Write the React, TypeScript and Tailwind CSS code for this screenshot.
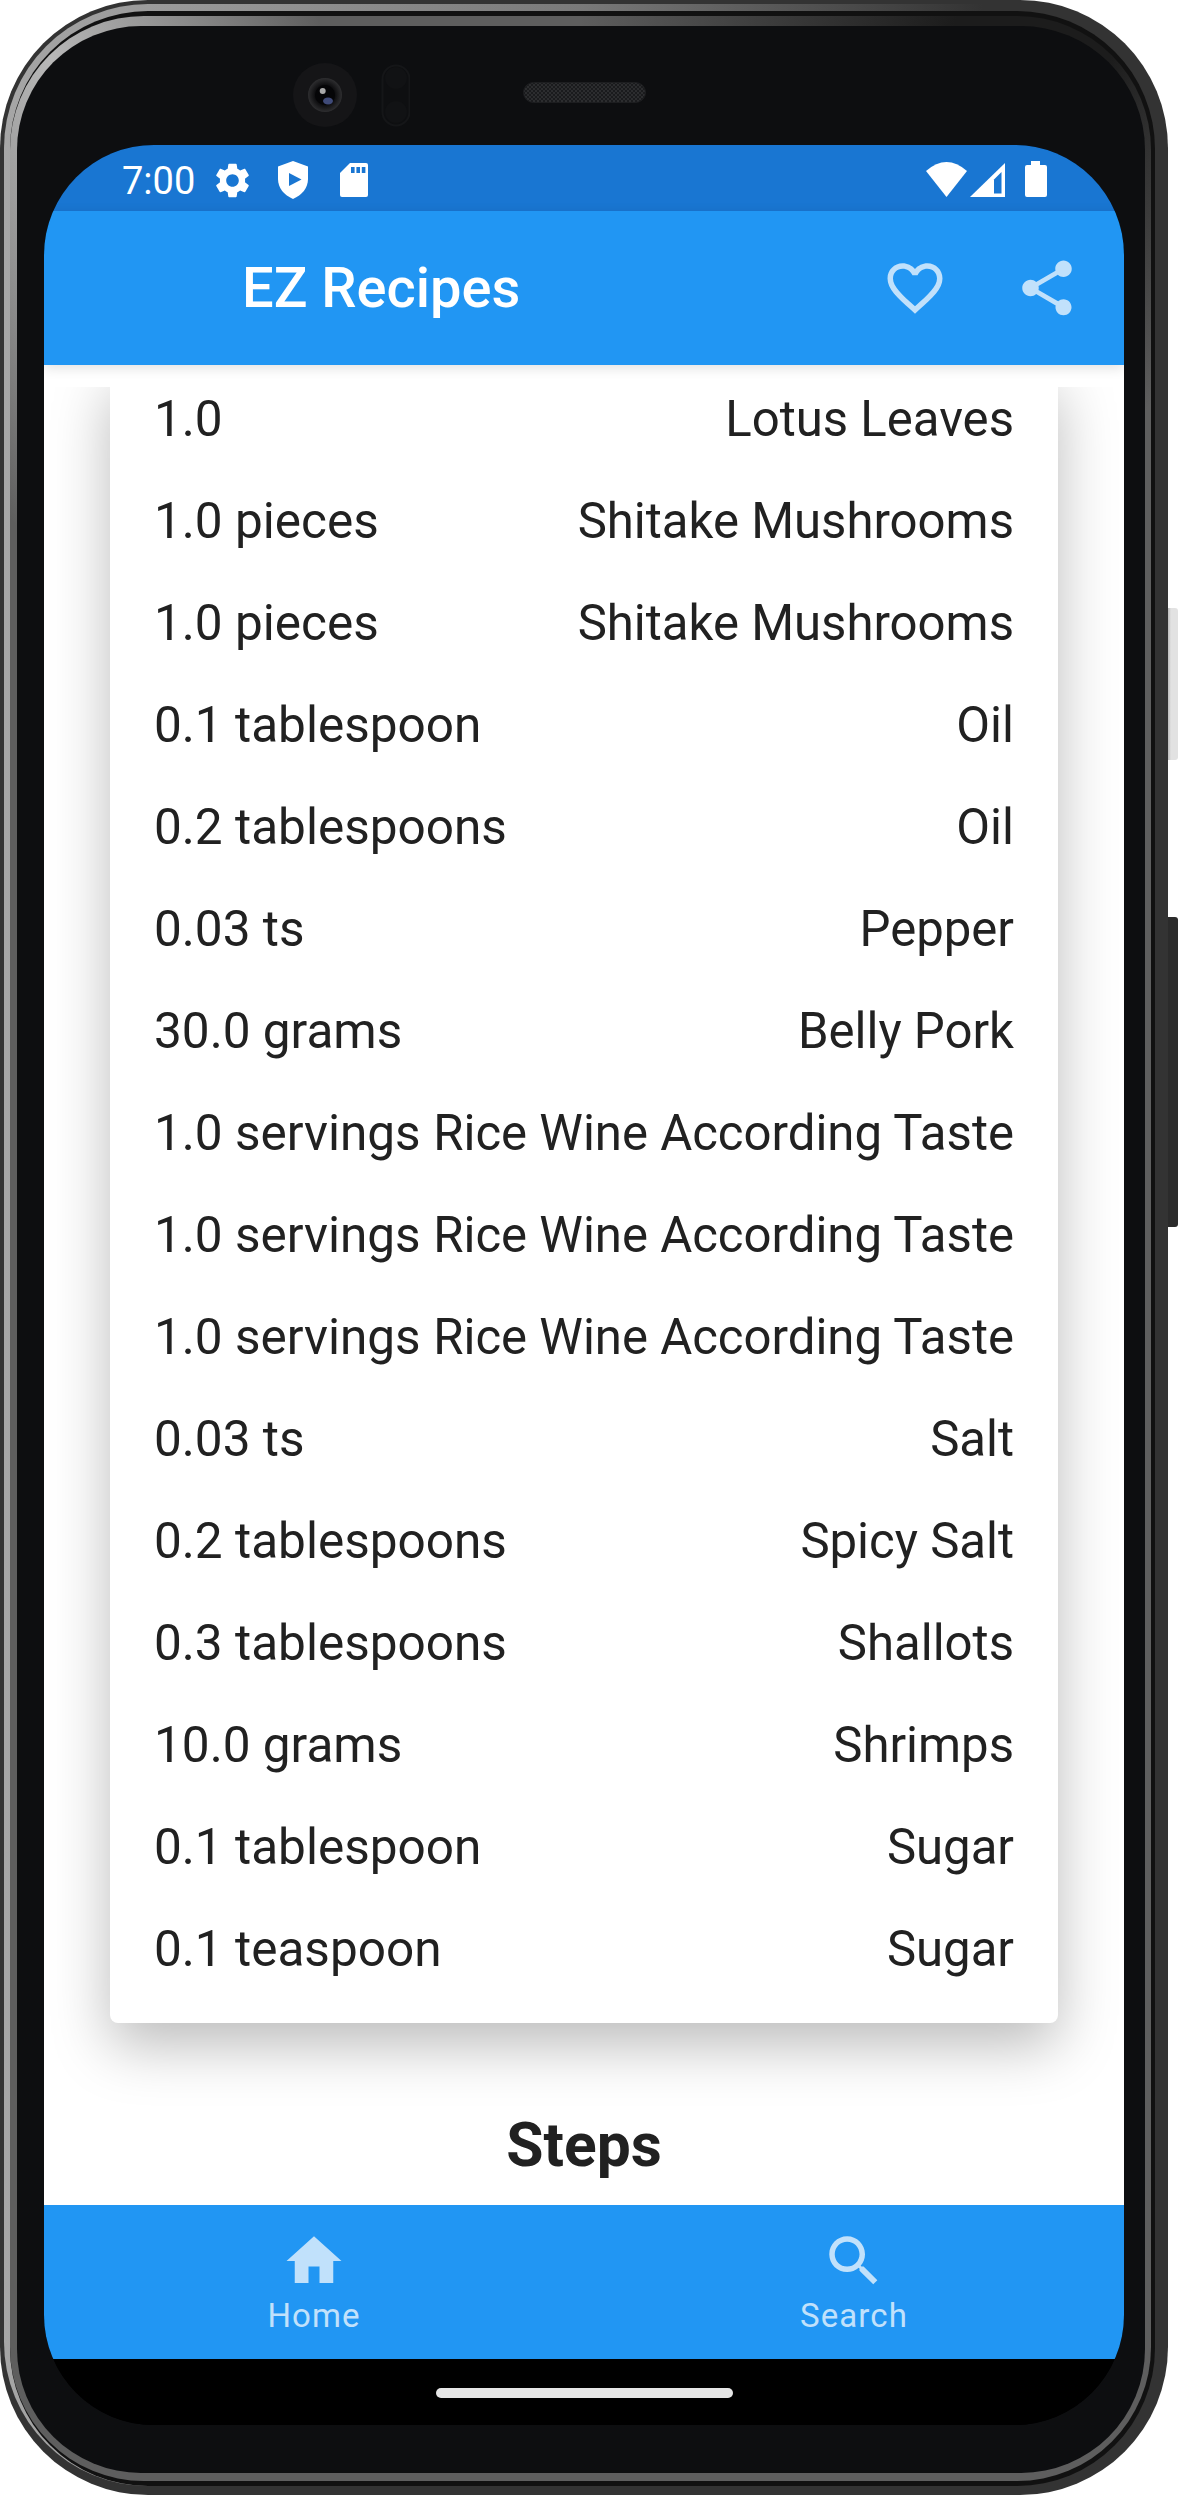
const rows: [string, string][] = [
  ["1.0", "Lotus Leaves"],
  ["1.0 pieces", "Shitake Mushrooms"],
  ["1.0 pieces", "Shitake Mushrooms"],
  ["0.1 tablespoon", "Oil"],
  ["0.2 tablespoons", "Oil"],
  ["0.03 ts", "Pepper"],
  ["30.0 grams", "Belly Pork"],
  ["1.0 servings", "Rice Wine According Taste"],
  ["1.0 servings", "Rice Wine According Taste"],
  ["1.0 servings", "Rice Wine According Taste"],
  ["0.03 ts", "Salt"],
  ["0.2 tablespoons", "Spicy Salt"],
  ["0.3 tablespoons", "Shallots"],
  ["10.0 grams", "Shrimps"],
  ["0.1 tablespoon", "Sugar"],
  ["0.1 teaspoon", "Sugar"],
];

function Cameras() {
  return (
    <svg width="117" height="64" viewBox="0 0 117 64" className="shrink-0">
      <defs>
        <radialGradient id="lens" cx="50%" cy="50%" r="50%">
          <stop offset="55%" stopColor="#0a0a0c" />
          <stop offset="100%" stopColor="#2e2e30" />
        </radialGradient>
      </defs>
      <circle cx="32" cy="32" r="32" fill="#151517" />
      <circle cx="32" cy="32" r="17" fill="url(#lens)" />
      <circle cx="32" cy="32" r="10" fill="#050507" />
      <ellipse cx="35" cy="38" rx="5" ry="3.5" fill="#3f4a78" />
      <circle cx="29.7" cy="28" r="3" fill="#a8a8a8" />
      <rect x="89.5" y="2.5" width="27" height="60" rx="13.5" fill="#0e0f11" stroke="#151618" strokeWidth="2" />
      <circle cx="103" cy="15" r="11" fill="#111214" />
      <circle cx="103" cy="49" r="11" fill="#111214" />
    </svg>
  );
}

function Speaker() {
  return (
    <svg width="123" height="21" viewBox="0 0 123 21" className="shrink-0 ml-[113px] mt-[19px]">
      <defs>
        <pattern id="mesh" width="4" height="4" patternUnits="userSpaceOnUse">
          <rect width="4" height="4" fill="#1a1b1d" />
          <rect width="2" height="2" fill="#2c2d2f" />
          <rect x="2" y="2" width="2" height="2" fill="#2c2d2f" />
        </pattern>
      </defs>
      <rect x="0.5" y="0.5" width="122" height="20" rx="10" fill="url(#mesh)" stroke="#1d1e20" />
    </svg>
  );
}

function StatusBar() {
  return (
    <div className="h-[66px] bg-[#1976D2] flex items-center pl-[78px] pr-[77px] text-white shrink-0">
      <span className="text-[38px] leading-none font-normal w-[72px] mt-[5px]">7:00</span>
      <svg width="35" height="35" viewBox="2.3 2 19.4 20" className="ml-[21px] mt-[5px]" fill="#fff">
        <path d="M19.14 12.94c.04-.3.06-.61.06-.94 0-.32-.02-.64-.07-.94l2.03-1.58c.18-.14.23-.41.12-.61l-1.92-3.32c-.12-.22-.37-.29-.59-.22l-2.39.96c-.5-.38-1.03-.7-1.62-.94l-.36-2.54c-.04-.24-.24-.41-.48-.41h-3.84c-.24 0-.43.17-.47.41l-.36 2.54c-.59.24-1.13.57-1.62.94l-2.39-.96c-.22-.08-.47 0-.59.22L2.74 8.87c-.12.21-.08.47.12.61l2.03 1.58c-.05.3-.09.63-.09.94s.02.64.07.94l-2.03 1.58c-.18.14-.23.41-.12.61l1.92 3.32c.12.22.37.29.59.22l2.39-.96c.5.38 1.03.7 1.62.94l.36 2.54c.05.24.24.41.48.41h3.84c.24 0 .44-.17.47-.41l.36-2.54c.59-.24 1.13-.56 1.62-.94l2.39.96c.22.08.47 0 .59-.22l1.92-3.32c.12-.22.07-.47-.12-.61l-2.01-1.58zM12 15.6c-1.98 0-3.6-1.62-3.6-3.6s1.62-3.6 3.6-3.6 3.6 1.62 3.6 3.6-1.62 3.6-3.6 3.6z" />
      </svg>
      <svg width="30" height="38" viewBox="0 0 30 38" className="ml-[28px] mt-[4px]">
        <path d="M15 0 L30 5.5 V18 C30 27 24 34 15 38 C6 34 0 27 0 18 V5.5 Z" fill="#fff" />
        <path d="M11 12 V25 L23.5 18.5 Z" fill="#1976D2" />
      </svg>
      <svg width="28" height="34" viewBox="0 0 28 34" className="ml-[32px] mt-[4px]">
        <path d="M10 0 H26 Q28 0 28 2 V32 Q28 34 26 34 H2 Q0 34 0 32 V10 Z" fill="#fff" />
        <path d="M11 4 h3.6 v6 h-3.6 z M16.4 4 h3.6 v6 h-3.6 z M21.8 4 h3.6 v6 h-3.6 z" fill="#1976D2" />
      </svg>
      <div className="flex-1" />
      <svg width="41" height="35" viewBox="0 0 41 35" className="mt-[3px]" fill="#fff">
        <path d="M0 9 Q20.5 -9 41 9 L20.5 35 Z" />
      </svg>
      <svg width="35" height="34" viewBox="0 0 35 34" className="ml-[3px] mt-[4px]">
        <path d="M0 34 L35 0 V34 Z" fill="#fff" />
        <path d="M31.5 9 L24 16.5 V30.5 H31.5 Z" fill="#1976D2" />
      </svg>
      <svg width="22" height="36" viewBox="0 0 22 36" className="ml-[20px] mt-[2px]" fill="#fff">
        <path d="M6 0 H15 V4 H20 Q22 4 22 6 V34 Q22 36 20 36 H2 Q0 36 0 34 V6 Q0 4 2 4 H6 Z" />
      </svg>
    </div>
  );
}

function AppBar() {
  return (
    <div className="relative z-10 h-[154px] bg-[#2196F3] flex items-center pl-[198px] pr-[11px] shrink-0 shadow-[0_3px_12px_rgba(0,0,0,0.12)]">
      <h1 className="flex-1 text-white text-[56px] leading-none font-medium">EZ Recipes</h1>
      <button className="w-[132px] h-[132px] flex items-center justify-center">
        <svg width="66" height="66" viewBox="0 0 24 24" fill="#c1e1fb">
          <path d="M16.5 3c-1.74 0-3.41.81-4.5 2.09C10.91 3.81 9.24 3 7.5 3 4.42 3 2 5.42 2 8.5c0 3.78 3.4 6.86 8.55 11.54L12 21.35l1.45-1.32C18.6 15.36 22 12.28 22 8.5 22 5.42 19.58 3 16.5 3zm-4.4 15.55l-.1.1-.1-.1C7.14 14.24 4 11.39 4 8.5 4 6.5 5.5 5 7.5 5c1.54 0 3.04.99 3.57 2.36h1.87C13.46 5.99 14.96 5 16.5 5c2 0 3.5 1.5 3.5 3.5 0 2.89-3.14 5.74-7.9 10.05z" />
        </svg>
      </button>
      <button className="w-[132px] h-[132px] flex items-center justify-center">
        <svg width="66" height="66" viewBox="0 0 24 24" fill="#c1e1fb">
          <path d="M18 16.08c-.76 0-1.44.3-1.96.77L8.91 12.7c.05-.23.09-.46.09-.7s-.04-.47-.09-.7l7.05-4.11c.54.5 1.25.81 2.04.81 1.66 0 3-1.34 3-3s-1.34-3-3-3-3 1.34-3 3c0 .24.04.47.09.7L8.04 9.81C7.5 9.31 6.79 9 6 9c-1.66 0-3 1.34-3 3s1.34 3 3 3c.79 0 1.5-.31 2.04-.81l7.12 4.16c-.05.21-.08.43-.08.65 0 1.61 1.31 2.92 2.92 2.92 1.61 0 2.92-1.31 2.92-2.92s-1.31-2.92-2.92-2.92z" />
        </svg>
      </button>
    </div>
  );
}

function Content() {
  return (
    <main className="flex-1 min-h-0 bg-white pt-[22px] flex flex-col">
      <div className="flex-1 min-h-0 overflow-hidden">
        <div className="mx-[66px] -mt-[18px] bg-white rounded-[8px] px-[44px] pb-[22px] shadow-[0_22px_58px_rgba(0,0,0,0.27)]">
          {rows.map(([amount, name], i) => (
            <div key={i} className="h-[102px] flex items-center justify-between text-[#212121] leading-none whitespace-nowrap">
              <span className="text-[49.5px]">{amount}</span>
              <span className="text-[49.1px]">{name}</span>
            </div>
          ))}
        </div>
        <h2 className="mt-[93px] text-center text-[#212121] text-[60.5px] leading-none font-bold">Steps</h2>
      </div>
    </main>
  );
}

function NavItem({ label, d }: { label: string; d: string }) {
  return (
    <div className="flex-1 flex flex-col items-center pt-[23px]">
      <svg width="66" height="66" viewBox="0 0 24 24" fill="#c1e1fb">
        <path d={d} />
      </svg>
      <span className="mt-[3px] text-[33px] leading-[38px] text-[#c1e1fb] tracking-[1.1px]">{label}</span>
    </div>
  );
}

export default function App() {
  return (
    <div className="w-[1178px] h-[2496px] bg-white flex font-['Roboto',sans-serif] overflow-hidden">
      {/* body */}
      <div className="w-[1168px] h-[2495px] shrink-0 rounded-[148px] bg-[#333] pt-[4px] pl-[4px] pr-[13px] pb-[9px] flex">
        <div className="flex-1 rounded-[144px] bg-[linear-gradient(90deg,#a6a6a6,#7a7a7a_50%,#333_85%)] pt-[7px] pl-[6px] flex">
          <div className="flex-1 rounded-[138px] bg-[#111] pt-[5px] pr-[4px] pb-[5px] flex">
            <div className="flex-1 rounded-[134px] bg-[conic-gradient(#5e5e5e_0deg,#1c1c1c_17deg,#1c1c1c_24deg,#5e5e5e_34deg,#5e5e5e_322deg,#b8b8b8_336deg,#5e5e5e_348deg,#5e5e5e_360deg)] pt-[10px] pl-[7px] pr-[6px] pb-[8px] flex">
              <div className="flex-1 rounded-[124px] bg-[#0d0e10] flex flex-col pl-[27px] pr-[21px] pb-[48px]">
                <div className="h-[119px] shrink-0 flex items-start pl-[249px] pt-[37px]">
                  <Cameras />
                  <Speaker />
                </div>
                <div className="flex-1 min-h-0 rounded-[110px] overflow-hidden bg-black flex flex-col">
                  <StatusBar />
                  <AppBar />
                  <Content />
                  <nav className="h-[154px] shrink-0 bg-[#2196F3] flex">
                    <NavItem label="Home" d="M10 20v-6h4v6h5v-8h3L12 3 2 12h3v8z" />
                    <NavItem label="Search" d="M15.5 14h-.79l-.28-.27C15.41 12.59 16 11.11 16 9.5 16 5.91 13.09 3 9.5 3S3 5.91 3 9.5 5.91 16 9.5 16c1.61 0 3.09-.59 4.23-1.57l.27.28v.79l5 4.99L20.49 19l-4.99-5zm-6 0C7.01 14 5 11.99 5 9.5S7.01 5 9.5 5 14 7.01 14 9.5 11.99 14 9.5 14z" />
                  </nav>
                  <div className="h-[66px] shrink-0 bg-black flex items-center justify-center pt-[2px]">
                    <div className="w-[297px] h-[10px] rounded-full bg-[#e6e6e6]" />
                  </div>
                </div>
              </div>
            </div>
          </div>
        </div>
      </div>
      {/* side buttons */}
      <div className="w-[10px] shrink-0 flex flex-col">
        <div className="mt-[608px] h-[152px] rounded-r-[3px] bg-[linear-gradient(90deg,#bdbdbd,#e2e2e2_30%,#e2e2e2)]" />
        <div className="mt-[157px] h-[310px] rounded-r-[3px] bg-[#2b2b2b]" />
      </div>
    </div>
  );
}
